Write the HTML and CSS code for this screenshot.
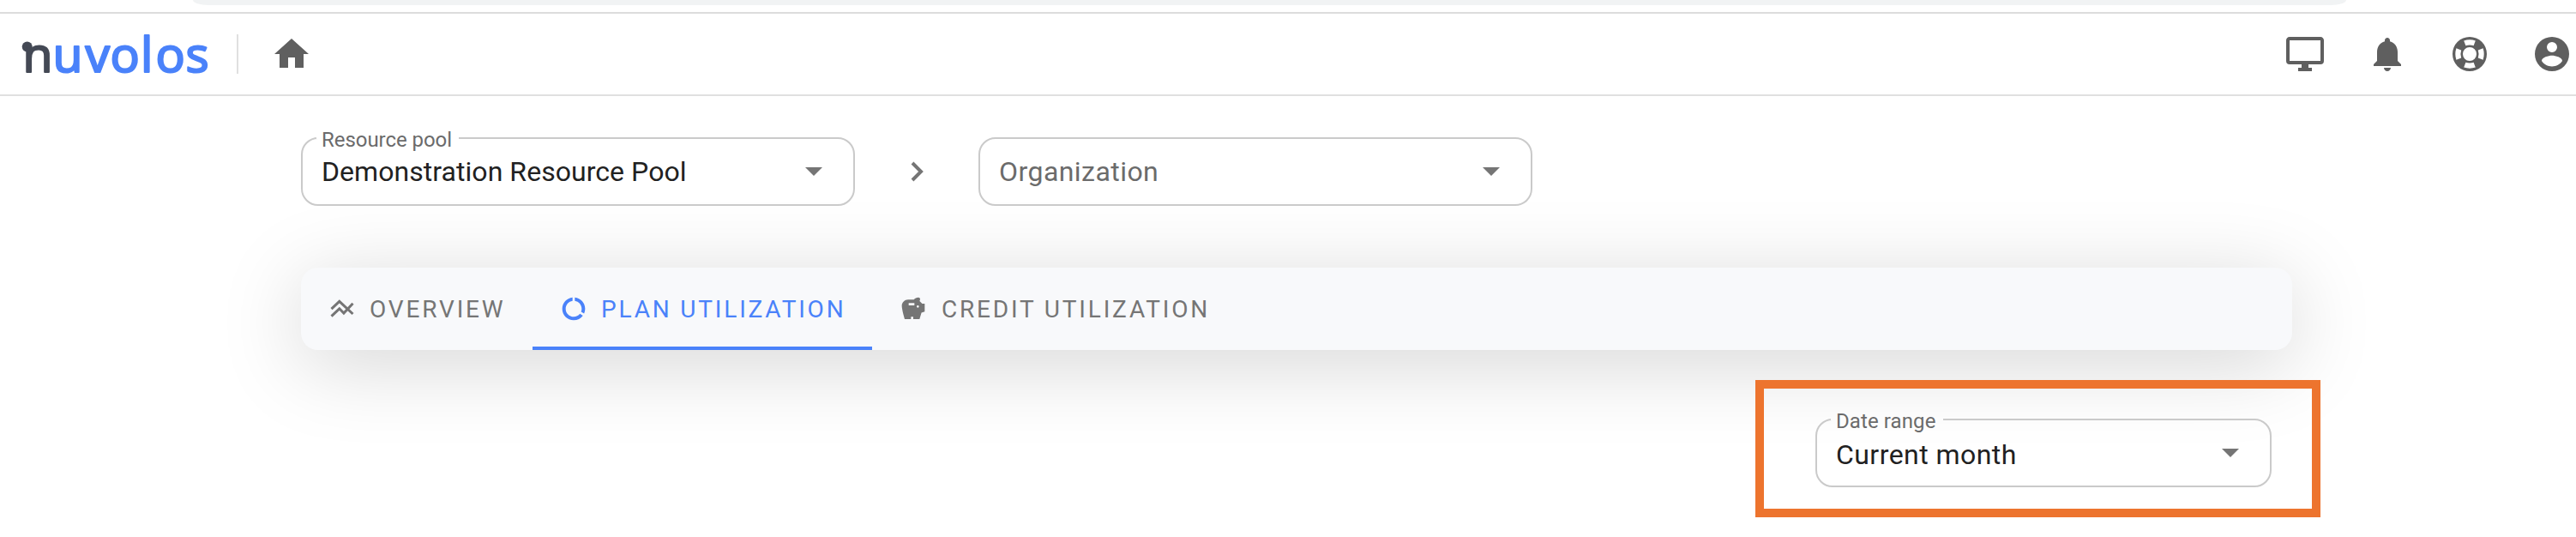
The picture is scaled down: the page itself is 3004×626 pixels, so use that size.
FILE: index.html
```html
<!DOCTYPE html>
<html lang="en">
<head>
<meta charset="utf-8">
<title>Nuvolos</title>
<link rel="stylesheet" href="styles.css">
</head>
<body>
<div class="browser-strip"><div class="address-bar"></div></div>
<header class="topbar">
  <svg class="logo" width="222" height="60" viewBox="0 0 222 60" role="img" aria-label="nuvolos">
    <circle class="logo-dot" cx="9.700" cy="24.500" r="6"/>
    <text class="logo-text" y="53.700"><tspan class="logo-dark" x="4.500">n</tspan><tspan x="39.500 77.500 106.500 142 159.500 194.500">uvolos</tspan></text>
  </svg>
  <span class="divider"></span>
  <svg class="icon" viewBox="0 0 24 24"><path d="M10,20V14H14V20H19V12H22L12,3L2,12H5V20H10Z"/></svg>
  <nav class="actions">
    <svg class="icon" viewBox="0 0 24 24"><path d="M21,16H3V4H21M21,2H3C1.89,2 1,2.89 1,4V16A2,2 0 0,0 3,18H10V20H8V22H16V20H14V18H21A2,2 0 0,0 23,16V4C23,2.89 22.1,2 21,2Z"/></svg>
    <svg class="icon" viewBox="0 0 24 24"><path d="M12 22c1.100 0 2-.9 2-2h-4c0 1.100.890 2 2 2zm6-6v-5c0-3.070-1.640-5.640-4.500-6.320V4c0-.83-.67-1.500-1.500-1.500s-1.500.670-1.500 1.500v.68C7.630 5.360 6 7.920 6 11v5l-2 2v1h16v-1l-2-2z"/></svg>
    <svg class="icon" viewBox="0 0 24 24"><path fill-rule="evenodd" d="M12 2a10 10 0 1 0 0 20a10 10 0 1 0 0-20zM12 8a4 4 0 1 1 0 8a4 4 0 1 1 0-8zM8.600 4.200Q12 3.100 15.400 4.200L14.300 7.100Q12 6.300 9.700 7.100zM8.600 19.800Q12 20.900 15.400 19.800L14.300 16.900Q12 17.700 9.700 16.900zM4.200 8.600Q3.100 12 4.200 15.400L7.100 14.300Q6.300 12 7.100 9.700zM19.800 8.600Q20.900 12 19.800 15.400L16.900 14.300Q17.700 12 16.900 9.700z"/></svg>
    <svg class="icon" viewBox="0 0 24 24"><path fill-rule="evenodd" d="M12 2a10 10 0 1 0 0 20a10 10 0 1 0 0-20zM12 5a3 3 0 1 1 0 6a3 3 0 1 1 0-6zM12 19.200c-2.500 0-4.710-1.280-6-3.220c.03-1.990 4-3.080 6-3.080c1.990 0 5.970 1.090 6 3.080c-1.290 1.940-3.500 3.220-6 3.220z"/></svg>
  </nav>
</header>
<main class="page">
  <div class="filters">
    <fieldset class="select"><legend class="t-label">Resource pool</legend><span class="value t-pool">Demonstration Resource Pool</span><i class="caret"></i></fieldset>
    <svg class="chevron" width="16" height="24" viewBox="0 0 16 24"><path d="M2 2L12 12L2 22"/></svg>
    <fieldset class="select"><span class="value placeholder">Organization</span><i class="caret"></i></fieldset>
  </div>
  <nav class="tabs">
    <a class="tab"><svg viewBox="0 0 32 32"><path class="line" d="M3.500 16.200L12.800 7.300L28.500 22M3.500 24.700L12.800 15.800L17.900 21L28.500 9.700"/></svg><span class="t-over">OVERVIEW</span></a>
    <a class="tab active"><svg viewBox="0 0 24 24"><path d="M13 2.050v3.030c3.390.490 6 3.390 6 6.920 0 .9-.18 1.750-.48 2.540l2.600 1.530c.56-1.240.880-2.620.880-4.070 0-5.180-3.950-9.450-9-9.950zM12 19c-3.870 0-7-3.130-7-7 0-3.530 2.610-6.430 6-6.920V2.050c-5.060.5-9 4.760-9 9.950 0 5.520 4.470 10 9.990 10 3.310 0 6.240-1.610 8.060-4.090l-2.600-1.530C16.170 17.980 14.210 19 12 19z"/></svg><span class="t-plan">PLAN UTILIZATION</span></a>
    <a class="tab"><svg viewBox="0 0 24 24"><path d="M19.830 7.500L17.560 5.230C17.630 4.810 17.740 4.420 17.880 4.080C17.960 3.900 18 3.710 18 3.500C18 2.670 17.330 2 16.500 2C14.860 2 13.410 2.790 12.500 4H7.500C4.460 4 2 6.460 2 9.500S4.500 21 4.500 21H10V19H12V21H17.500L19.180 15.410L22 14.470V7.500H19.830M13 9H8V7H13V9M16 11C15.450 11 15 10.550 15 10C15 9.450 15.450 9 16 9C16.550 9 17 9.450 17 10C17 10.550 16.550 11 16 11Z"/></svg><span class="t-credit">CREDIT UTILIZATION</span></a>
  </nav>
  <section class="highlight">
    <fieldset class="select date"><legend class="t-date">Date range</legend><span class="value t-month">Current month</span><i class="caret"></i></fieldset>
  </section>
</main>
</body>
</html>
```
FILE: styles.css
```css
* { box-sizing: border-box; }
body {
  margin: 0;
  height: 626px;
  overflow: hidden;
  background: #fff;
  font-family: Roboto, "Liberation Sans", sans-serif;
  color: #212121;
}
.browser-strip {
  height: 16px;
  padding: 0 268px 0 225px;
  border-bottom: 2px solid #dcdcdc;
  overflow: hidden;
}
.address-bar {
  height: 6px;
  background: #f1f3f4;
  border-radius: 0 0 18px 18px / 0 0 6px 6px;
}
.topbar {
  display: flex;
  align-items: center;
  height: 96px;
  padding: 0 4px 0 22px;
  border-bottom: 2px solid #e0e0e0;
}
.logo { display: block; overflow: visible; margin-bottom: 6px; }
.logo-text {
  font-family: "Open Sans", "Noto Sans", sans-serif;
  font-size: 57px;
  font-weight: 500;
  fill: #4a82fa;
  stroke: #4a82fa;
  stroke-width: 2.2px;
  stroke-linejoin: round;
}
.logo-dark { fill: #444955; stroke: #444955; }
.logo-dot { fill: #444955; }
.divider { width: 2px; height: 46px; margin: 0 38px 0 32px; background: #e0e0e0; }
.icon { width: 48px; height: 48px; fill: #5f5f5f; }
.actions { display: flex; gap: 48px; margin-left: auto; }
.page { padding: 48px 0 0 351px; }
.filters { display: flex; align-items: center; height: 80px; }
.select {
  display: flex;
  align-items: center;
  justify-content: space-between;
  width: 646px;
  height: 80px;
  min-width: 0;
  margin: 0;
  padding: 0 36px 0 16px;
  border: 2px solid #cacaca;
  border-radius: 20px;
}
.select legend {
  height: 2px;
  padding: 0 8px 0 6px;
  font-size: 24px;
  line-height: 7px;
  color: #6b6b6b;
  white-space: nowrap;
}
.value { padding-left: 6px; font-size: 32px; line-height: 76px; white-space: nowrap; }
.placeholder { color: #6b6b6b; letter-spacing: .450px; }
.caret {
  width: 20px;
  height: 10px;
  background: #757575;
  clip-path: polygon(0 0, 100% 0, 50% 100%);
}
.chevron { margin: 0 63px 0 65px; fill: none; stroke: #757575; stroke-width: 4; }
.tabs {
  display: flex;
  width: 2322px;
  height: 96px;
  margin-top: 72px;
  background: #f8f9fb;
  border-radius: 20px;
  box-shadow: 0 16px 96px rgba(0, 0, 0, .17);
}
.tab {
  display: flex;
  align-items: center;
  gap: 16px;
  width: 270px;
  padding: 0 0 0 32px;
  font-size: 28px;
  color: #757575;
  white-space: nowrap;
}
.tab svg { flex: none; width: 32px; height: 32px; fill: currentColor; }
.tab .line { fill: none; stroke: currentColor; stroke-width: 3; }
.tab.active { width: 396px; color: #4a82fa; box-shadow: inset 0 -4px #4a82fa; }
.t-label { letter-spacing: -.05px; }
.t-date { letter-spacing: .1px; }
.t-pool { letter-spacing: .05px; }
.t-over, .t-plan, .t-credit { letter-spacing: 2.820px; }
.t-credit { padding-left: 1px; }
.highlight {
  width: 659px;
  height: 160px;
  margin: 35px 0 0 1696px;
  padding: 35px 0 0 60px;
  border: 10px solid #ed742e;
}
.date { width: 532px; }
.t-month { padding-top: 3px; letter-spacing: .450px; }
```
